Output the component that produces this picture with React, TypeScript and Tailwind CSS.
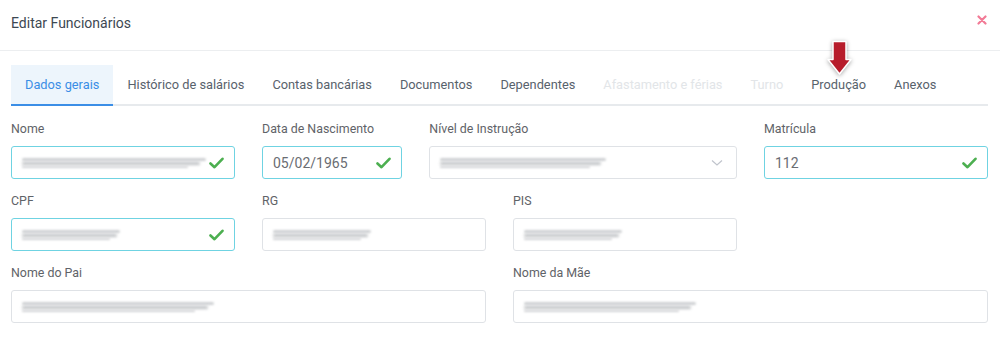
import React from "react"

type Field = {
  label: string
  span: string
  value?: string
  blur?: number
  valid?: boolean
  select?: boolean
}

const rows: Field[][] = [
  [
    { label: "Nome", span: "col-span-3", blur: 184, valid: true },
    { label: "Data de Nascimento", span: "col-span-2", value: "05/02/1965", valid: true },
    { label: "Nível de Instrução", span: "col-span-4", blur: 166, select: true },
    { label: "Matrícula", span: "col-span-3", value: "112", valid: true },
  ],
  [
    { label: "CPF", span: "col-span-3", blur: 98, valid: true },
    { label: "RG", span: "col-span-3", blur: 98 },
    { label: "PIS", span: "col-span-3", blur: 98 },
  ],
  [
    { label: "Nome do Pai", span: "col-span-6", blur: 192 },
    { label: "Nome da Mãe", span: "col-span-6", blur: 172 },
  ],
]

const tabs = [
  { name: "Dados gerais", active: true },
  { name: "Histórico de salários" },
  { name: "Contas bancárias" },
  { name: "Documentos" },
  { name: "Dependentes" },
  { name: "Afastamento e férias", disabled: true },
  { name: "Turno", disabled: true },
  { name: "Produção", arrow: true },
  { name: "Anexos" },
]

const Check = () => (
  <svg width="15" height="12" viewBox="0 0 15 12" className="shrink-0">
    <path d="M1.5 6.5 L5.5 10.2 L13.5 1.8" fill="none" stroke="#4caf50" strokeWidth="2.6" strokeLinecap="round" strokeLinejoin="round" />
  </svg>
)

const Chevron = () => (
  <svg width="12" height="8" viewBox="0 0 12 8" className="shrink-0">
    <path d="M1 1.5 L6 6 L11 1.5" fill="none" stroke="#c0c4cc" strokeWidth="1.2" />
  </svg>
)

const Arrow = () => (
  <svg width="29" height="40" viewBox="0 0 29 40" className="absolute left-1/2 -translate-x-1/2 -top-[25px] drop-shadow-[0_1px_2px_rgba(0,0,0,0.35)]">
    <path d="M8.5 1.5 H21.5 V19.5 H26.5 L15 34 L3.5 19.5 H8.5 Z" fill="#b71c2b" stroke="#ffffff" strokeWidth="1.5" strokeLinejoin="round" />
  </svg>
)

const Input = ({ f }: { f: Field }) => (
  <div className={f.span}>
    <div className="text-[12.4px] leading-[18px] text-[#5f6368] mb-[8px]">{f.label}</div>
    <div
      className={`h-[33px] rounded-[3px] border bg-white flex items-center pl-[10px] pr-[10px] ${
        f.valid ? "border-[#6fd3e2]" : "border-[#dfe2e6]"
      }`}
    >
      <div className="flex-1 min-w-0">
        {f.value ? (
          <span className="text-[14px] text-[#6a6d72]">{f.value}</span>
        ) : (
          <div className="flex flex-col gap-[1px]" style={{ width: f.blur }}>
            <div className="h-[3px] bg-[#cfd1d4] blur-[1.2px] rounded-full" />
            <div className="h-[3px] bg-[#bdc0c3] blur-[1.4px] rounded-full w-[97%]" />
            <div className="h-[2px] bg-[#d3d5d8] blur-[1px] rounded-full w-[90%]" />
          </div>
        )}
      </div>
      {f.valid && <Check />}
      {f.select && <span className="mr-[3px]"><Chevron /></span>}
    </div>
  </div>
)

export default function App() {
  return (
    <div className="w-[1000px] h-[347px] bg-white font-['Roboto',sans-serif] overflow-hidden">
      <header className="h-[51px] border-b border-[#eceef0] flex items-center justify-between pl-[11px] pr-[12px]">
        <h1 className="text-[14px] text-[#3d4852] -mt-[4px]">Editar Funcionários</h1>
        <svg width="10" height="10" viewBox="0 0 10 10" className="-mt-[10px] mr-[1px]">
          <path d="M1.5 1.5 L8.5 8.5 M8.5 1.5 L1.5 8.5" stroke="#f27a96" strokeWidth="2.2" strokeLinecap="round" />
        </svg>
      </header>

      <div className="pl-[11px] pr-[12px] pt-[14px]">
        <nav className="flex border-b-2 border-[#e7eaed] h-[41px]">
          {tabs.map((t) => (
            <div
              key={t.name}
              className={`relative px-[14px] flex items-center text-[12.8px] -mb-[2px] border-b-2 ${
                t.active
                  ? "bg-[#edf5fc] text-[#3b8ee6] border-[#3b8ee6]"
                  : t.disabled
                  ? "text-[#e2e5e8] border-transparent"
                  : "text-[#58626c] border-transparent"
              }`}
            >
              {t.arrow && <Arrow />}
              {t.name}
            </div>
          ))}
        </nav>

        <form className="pt-[14px] flex flex-col gap-[13px]">
          {rows.map((r, i) => (
            <div key={i} className="grid grid-cols-12 gap-x-[27px]">
              {r.map((f) => (
                <Input key={f.label} f={f} />
              ))}
            </div>
          ))}
        </form>
      </div>
    </div>
  )
}
